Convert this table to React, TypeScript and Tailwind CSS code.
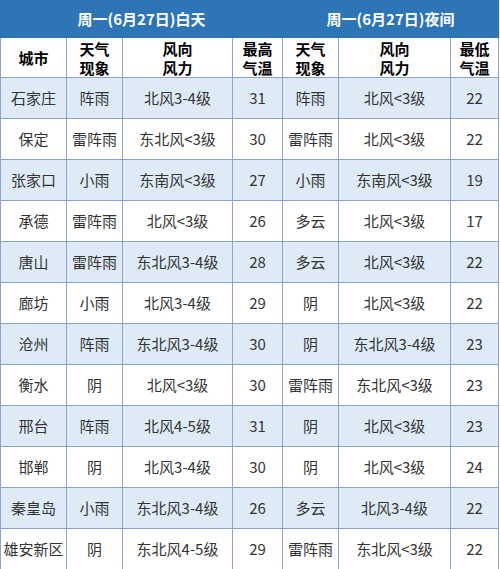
const rows: string[][] = [
  ["石家庄", "阵雨", "北风3-4级", "31", "阵雨", "北风<3级", "22"],
  ["保定", "雷阵雨", "东北风<3级", "30", "雷阵雨", "北风<3级", "22"],
  ["张家口", "小雨", "东南风<3级", "27", "小雨", "东南风<3级", "19"],
  ["承德", "雷阵雨", "北风<3级", "26", "多云", "北风<3级", "17"],
  ["唐山", "雷阵雨", "东北风3-4级", "28", "多云", "北风<3级", "22"],
  ["廊坊", "小雨", "北风3-4级", "29", "阴", "北风<3级", "22"],
  ["沧州", "阵雨", "东北风3-4级", "30", "阴", "东北风3-4级", "23"],
  ["衡水", "阴", "北风<3级", "30", "雷阵雨", "东北风<3级", "23"],
  ["邢台", "阵雨", "北风4-5级", "31", "阴", "北风<3级", "23"],
  ["邯郸", "阴", "北风3-4级", "30", "阴", "北风<3级", "24"],
  ["秦皇岛", "小雨", "东北风3-4级", "26", "多云", "北风3-4级", "22"],
  ["雄安新区", "阴", "东北风4-5级", "29", "雷阵雨", "东北风<3级", "22"],
];

const heads: string[][] = [
  ["城市"],
  ["天气", "现象"],
  ["风向", "风力"],
  ["最高", "气温"],
  ["天气", "现象"],
  ["风向", "风力"],
  ["最低", "气温"],
];

export default function App() {
  return (
    <div
      className="w-[500px] h-[569px] bg-white overflow-hidden"
      style={{ fontFamily: '"Noto Sans CJK SC", "Noto Sans", sans-serif' }}
    >
      <table className="w-[498px] table-fixed border-collapse text-center text-[15px]">
        <colgroup>
          <col className="w-[66px]" />
          <col className="w-[56px]" />
          <col className="w-[110px]" />
          <col className="w-[50px]" />
          <col className="w-[56px]" />
          <col className="w-[112px]" />
          <col className="w-[48px]" />
        </colgroup>
        <thead>
          {/* date row */}
          <tr className="h-[37px] bg-[#2e75b6] text-white font-bold">
            <th colSpan={4} className="border border-[#2e75b6] p-0">
              周一(6月27日)白天
            </th>
            <th colSpan={3} className="border border-[#2e75b6] p-0">
              周一(6月27日)夜间
            </th>
          </tr>
          <tr className="h-[40px] bg-white text-black font-bold leading-[19px]">
            {heads.map((h, i) => (
              <th key={i} className="border border-[#8aa5c8] p-0">
                {h.map((line, j) => (
                  <div key={j}>{line}</div>
                ))}
              </th>
            ))}
          </tr>
        </thead>
        <tbody>
          {rows.map((r, i) => (
            <tr
              key={r[0]}
              className={`h-[41px] text-[#333] ${i % 2 === 0 ? "bg-[#deebf7]" : "bg-white"}`}
            >
              {r.map((cell, j) => (
                <td key={j} className="border border-[#8aa5c8] p-0 whitespace-nowrap">
                  {cell}
                </td>
              ))}
            </tr>
          ))}
        </tbody>
      </table>
    </div>
  );
}
